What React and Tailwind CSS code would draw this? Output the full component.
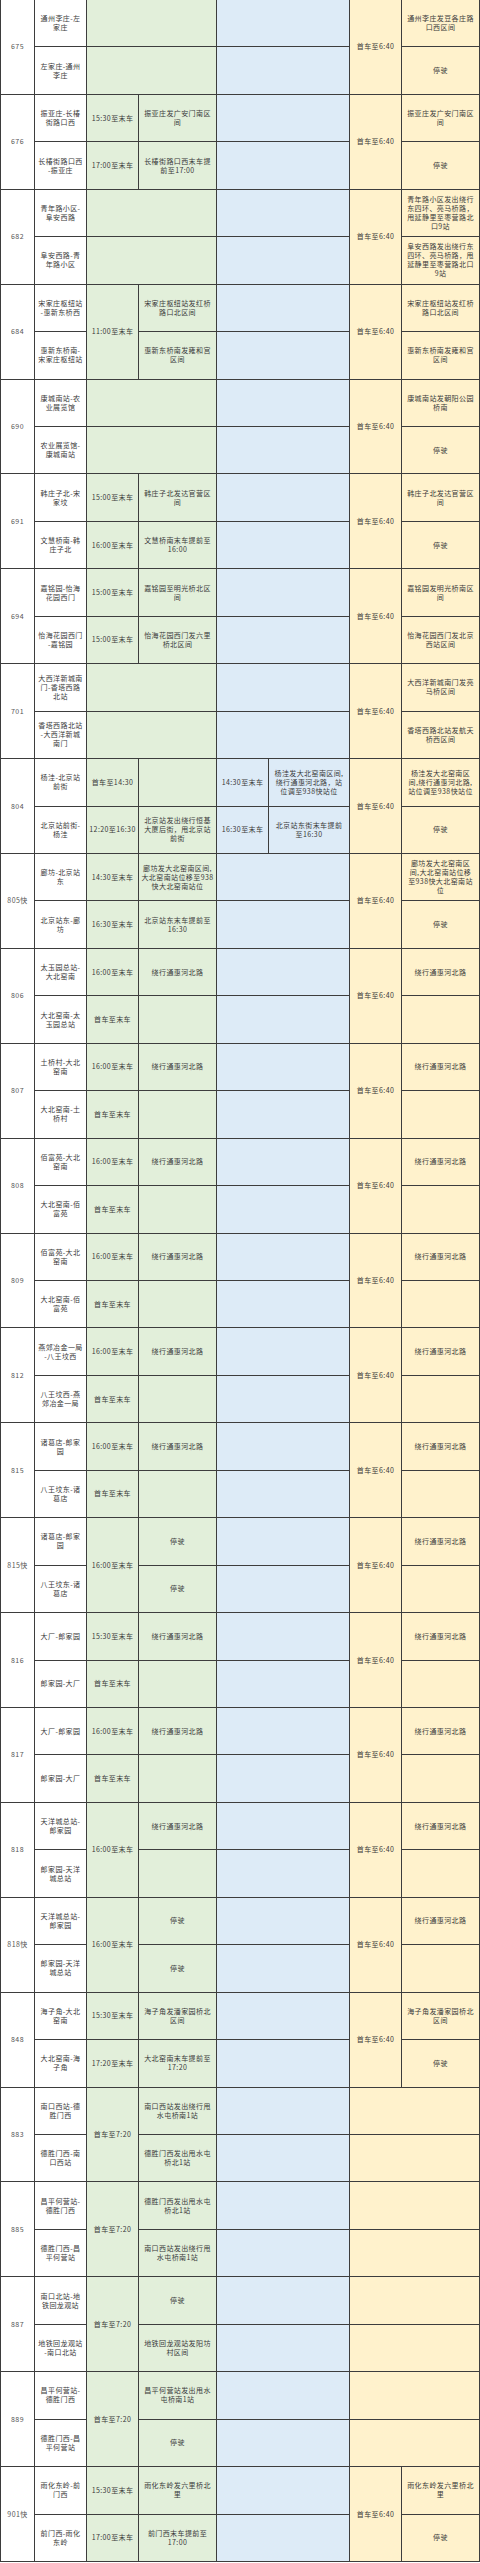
import React from 'react';

const G = 'bg-[#e2efda]';
const B = 'bg-[#ddebf7]';
const Y = 'bg-[#fff2cc]';
const FIRST = '首车至6:40';
const STOP = '停驶';
const DETOUR = '绕行通惠河北路';

// green / blue / yellow blocks:
//   null             -> empty, merged across the two columns
//   { t: [a, b], d } -> time per direction
//   { span: 't', d } -> one time cell spanning both directions
const routes = [
  { no: '675', dirs: ['通州李庄-左\n家庄', '左家庄-通州\n李庄'], g: null, y: { span: FIRST, d: ['通州李庄发豆各庄路\n口西区间', STOP] } },
  { no: '676', dirs: ['振亚庄-长椿\n街路口西', '长椿街路口西\n-振亚庄'], g: { t: ['15:30至末车', '17:00至末车'], d: ['振亚庄发广安门南区\n间', '长椿街路口西末车提\n前至17:00'] }, y: { span: FIRST, d: ['振亚庄发广安门南区\n间', STOP] } },
  { no: '682', dirs: ['青年路小区-\n阜安西路', '阜安西路-青\n年路小区'], g: null, y: { span: FIRST, d: ['青年路小区发出绕行\n东四环、亮马桥路，\n甩延静里至枣营路北\n口9站', '阜安西路发出绕行东\n四环、亮马桥路，甩\n延静里至枣营路北口\n9站'] } },
  { no: '684', dirs: ['宋家庄枢纽站\n-惠新东桥西', '惠新东桥南-\n宋家庄枢纽站'], g: { span: '11:00至末车', d: ['宋家庄枢纽站发红桥\n路口北区间', '惠新东桥南发雍和宫\n区间'] }, y: { span: FIRST, d: ['宋家庄枢纽站发红桥\n路口北区间', '惠新东桥南发雍和宫\n区间'] } },
  { no: '690', dirs: ['康城南站-农\n业展览馆', '农业展览馆-\n康城南站'], g: null, y: { span: FIRST, d: ['康城南站发朝阳公园\n桥南', STOP] } },
  { no: '691', dirs: ['韩庄子北-宋\n家坟', '文慧桥南-韩\n庄子北'], g: { t: ['15:00至末车', '16:00至末车'], d: ['韩庄子北发达官营区\n间', '文慧桥南末车提前至\n16:00'] }, y: { span: FIRST, d: ['韩庄子北发达官营区\n间', STOP] } },
  { no: '694', dirs: ['嘉铭园-怡海\n花园西门', '怡海花园西门\n-嘉铭园'], g: { t: ['15:00至末车', '15:00至末车'], d: ['嘉铭园至明光桥北区\n间', '怡海花园西门发六里\n桥北区间'] }, y: { span: FIRST, d: ['嘉铭园发明光桥南区\n间', '怡海花园西门发北京\n西站区间'] } },
  { no: '701', dirs: ['大西洋新城南\n门-香塔西路\n北站', '香塔西路北站\n-大西洋新城\n南门'], g: null, y: { span: FIRST, d: ['大西洋新城南门发亮\n马桥区间', '香塔西路北站发航天\n桥西区间'] } },
  {
    no: '804', dirs: ['杨洼-北京站\n前街', '北京站前街-\n杨洼'],
    g: { t: ['首车至14:30', '12:20至16:30'], d: ['', '北京站发出绕行恒基\n大厦后街，甩北京站\n前街'] },
    b: { t: ['14:30至末车', '16:30至末车'], d: ['杨洼发大北窑南区间,\n绕行通惠河北路，站\n位调至938快站位', '北京站东街末车提前\n至16:30'] },
    y: { span: FIRST, d: ['杨洼发大北窑南区\n间,绕行通惠河北路,\n站位调至938快站位', STOP] },
  },
  { no: '805快', dirs: ['廊坊-北京站\n东', '北京站东-廊\n坊'], g: { t: ['14:30至末车', '16:30至末车'], d: ['廊坊发大北窑南区间,\n大北窑南站位移至938\n快大北窑南站位', '北京站东末车提前至\n16:30'] }, y: { span: FIRST, d: ['廊坊发大北窑南区\n间,大北窑南站位移\n至938快大北窑南站\n位', STOP] } },
  { no: '806', dirs: ['太玉园总站-\n大北窑南', '大北窑南-太\n玉园总站'], g: { t: ['16:00至末车', '首车至末车'], d: [DETOUR, ''] }, y: { span: FIRST, d: [DETOUR, ''] } },
  { no: '807', dirs: ['土桥村-大北\n窑南', '大北窑南-土\n桥村'], g: { t: ['16:00至末车', '首车至末车'], d: [DETOUR, ''] }, y: { span: FIRST, d: [DETOUR, ''] } },
  { no: '808', dirs: ['佰富苑-大北\n窑南', '大北窑南-佰\n富苑'], g: { t: ['16:00至末车', '首车至末车'], d: [DETOUR, ''] }, y: { span: FIRST, d: [DETOUR, ''] } },
  { no: '809', dirs: ['佰富苑-大北\n窑南', '大北窑南-佰\n富苑'], g: { t: ['16:00至末车', '首车至末车'], d: [DETOUR, ''] }, y: { span: FIRST, d: [DETOUR, ''] } },
  { no: '812', dirs: ['燕郊冶金一局\n-八王坟西', '八王坟西-燕\n郊冶金一局'], g: { t: ['16:00至末车', '首车至末车'], d: [DETOUR, ''] }, y: { span: FIRST, d: [DETOUR, ''] } },
  { no: '815', dirs: ['诸葛店-郎家\n园', '八王坟东-诸\n葛店'], g: { t: ['16:00至末车', '首车至末车'], d: [DETOUR, ''] }, y: { span: FIRST, d: [DETOUR, ''] } },
  { no: '815快', dirs: ['诸葛店-郎家\n园', '八王坟东-诸\n葛店'], g: { span: '16:00至末车', d: [STOP, STOP] }, y: { span: FIRST, d: [DETOUR, ''] } },
  { no: '816', dirs: ['大厂-郎家园', '郎家园-大厂'], g: { t: ['15:30至末车', '首车至末车'], d: [DETOUR, ''] }, y: { span: FIRST, d: [DETOUR, ''] } },
  { no: '817', dirs: ['大厂-郎家园', '郎家园-大厂'], g: { t: ['16:00至末车', '首车至末车'], d: [DETOUR, ''] }, y: { span: FIRST, d: [DETOUR, ''] } },
  { no: '818', dirs: ['天洋城总站-\n郎家园', '郎家园-天洋\n城总站'], g: { span: '16:00至末车', d: [DETOUR, ''] }, y: { span: FIRST, d: [DETOUR, ''] } },
  { no: '818快', dirs: ['天洋城总站-\n郎家园', '郎家园-天洋\n城总站'], g: { span: '16:00至末车', d: [STOP, STOP] }, y: { span: FIRST, d: [DETOUR, ''] } },
  { no: '848', dirs: ['海子角-大北\n窑南', '大北窑南-海\n子角'], g: { t: ['15:30至末车', '17:20至末车'], d: ['海子角发潘家园桥北\n区间', '大北窑南末车提前至\n17:20'] }, y: { span: FIRST, d: ['海子角发潘家园桥北\n区间', STOP] } },
  { no: '883', dirs: ['南口西站-德\n胜门西', '德胜门西-南\n口西站'], g: { span: '首车至7:20', d: ['南口西站发出绕行甩\n水屯桥南1站', '德胜门西发出甩水屯\n桥北1站'] }, y: null },
  { no: '885', dirs: ['昌平何营站-\n德胜门西', '德胜门西-昌\n平何营站'], g: { span: '首车至7:20', d: ['德胜门西发出甩水屯\n桥北1站', '南口西站发出绕行甩\n水屯桥南1站'] }, y: null },
  { no: '887', dirs: ['南口北站-地\n铁回龙观站', '地铁回龙观站\n-南口北站'], g: { span: '首车至7:20', d: [STOP, '地铁回龙观站发阳坊\n村区间'] }, y: null },
  { no: '889', dirs: ['昌平何营站-\n德胜门西', '德胜门西-昌\n平何营站'], g: { span: '首车至7:20', d: ['昌平何营站发出甩水\n屯桥南1站', STOP] }, y: null },
  { no: '901快', dirs: ['雨化东岭-前\n门西', '前门西-雨化\n东岭'], g: { t: ['15:30至末车', '17:00至末车'], d: ['雨化东岭发六里桥北\n里', '前门西末车提前至\n17:00'] }, y: { span: FIRST, d: ['雨化东岭发六里桥北\n里', STOP] } },
];

const Cell = ({ bg, span = '', children }) => (
  <div className={`${bg} ${span} flex items-center justify-center text-center whitespace-pre-line px-[2px]`}>
    {children}
  </div>
);

// cells of one color block for direction i (0 or 1)
const block = (blk, bg, i, key) => {
  if (!blk) return [<Cell key={key} bg={bg} span="col-span-2" />];
  const cells = [];
  if (blk.span) {
    if (i === 0) cells.push(<Cell key={key + 't'} bg={bg} span="row-span-2">{blk.span}</Cell>);
  } else {
    cells.push(<Cell key={key + 't'} bg={bg}>{blk.t[i]}</Cell>);
  }
  cells.push(<Cell key={key + 'd'} bg={bg}>{blk.d[i]}</Cell>);
  return cells;
};

export default function App() {
  const cells = [];
  routes.forEach((r) => {
    [0, 1].forEach((i) => {
      const k = r.no + '-' + i;
      if (i === 0) {
        cells.push(
          <Cell key={k + 'no'} bg="bg-white" span="row-span-2 text-[#555]">{r.no}</Cell>
        );
      }
      cells.push(<Cell key={k + 'dir'} bg="bg-white">{r.dirs[i]}</Cell>);
      cells.push(...block(r.g, G, i, k + 'g'));
      cells.push(...block(r.b, B, i, k + 'b'));
      cells.push(...block(r.y, Y, i, k + 'y'));
    });
  });

  return (
    <div className="w-[480px] bg-white">
      <div
        className="grid h-[2562px] grid-cols-[33px_51px_51px_77px_51px_80px_51px_77px] grid-rows-[repeat(54,minmax(0,1fr))] gap-px bg-[#3d3d3d] px-px pb-px text-[7px] leading-[9px] tracking-[0.4px] text-[#3a3a3a]"
        style={{ fontFamily: '"Noto Sans CJK SC", "Noto Sans", sans-serif' }}
      >
        {cells}
      </div>
    </div>
  );
}
